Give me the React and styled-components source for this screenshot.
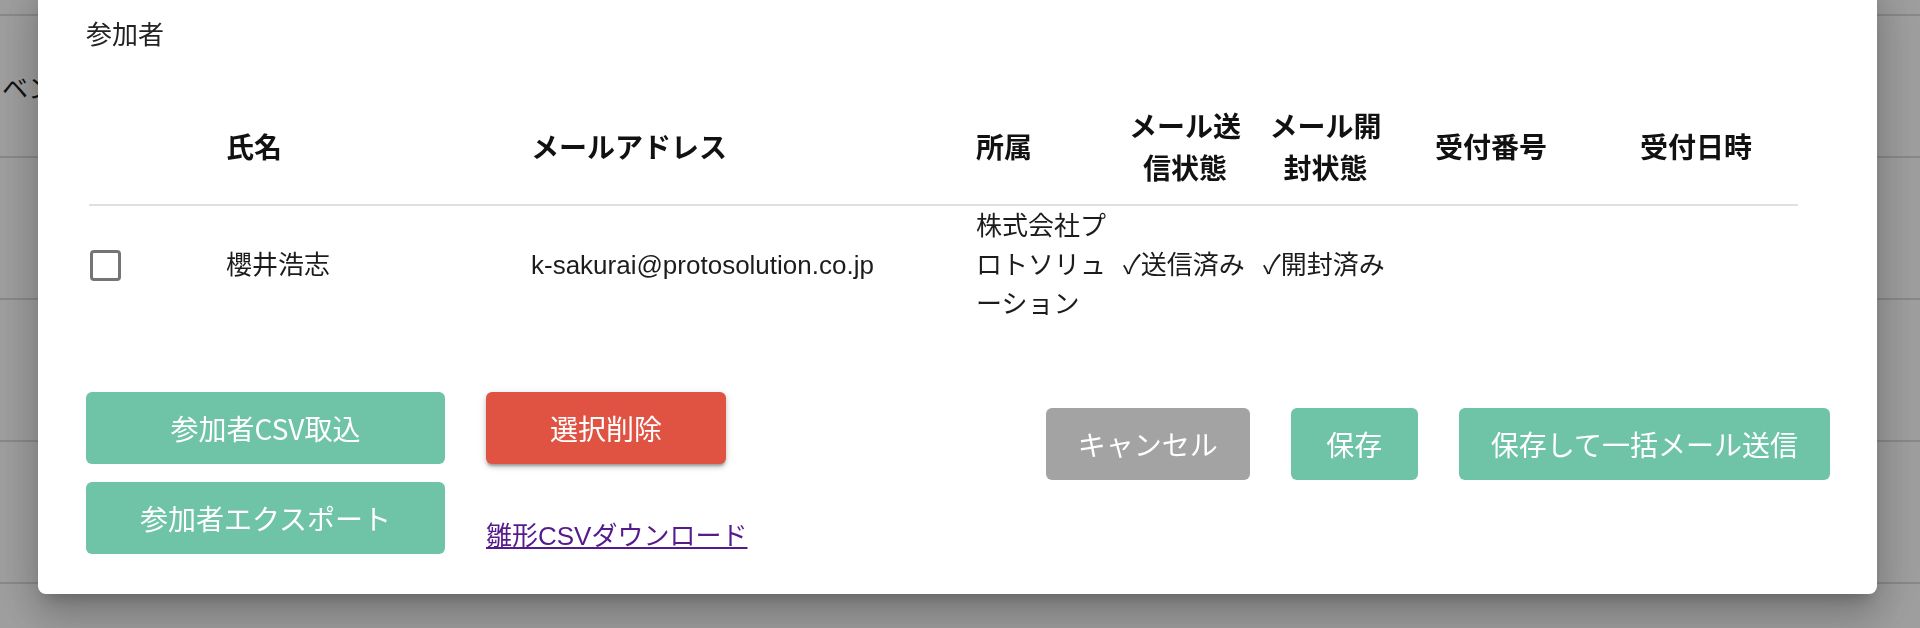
import React from "react";
import styled, { createGlobalStyle } from "styled-components";

const GlobalStyle = createGlobalStyle`
  html, body {
    margin: 0;
    padding: 0;
    overflow: hidden;
    background: #fff;
  }
  body {
    font-family: "Liberation Sans", "Noto Sans CJK JP", "DejaVu Sans", sans-serif;
    color: #1c1c1c;
  }
`;

const Page = styled.div`
  height: 628px;
  background: #fff;
`;

const BgRow = styled.div`
  height: ${({ $h }) => $h}px;
  border-bottom: 2px solid #dcdcdc;
  display: flex;
  align-items: center;
  padding-left: 2px;
  font-size: 26px;
  white-space: nowrap;
`;

const Backdrop = styled.div`
  position: fixed;
  inset: 0;
  background: rgba(0, 0, 0, 0.38);
`;

const Dialog = styled.div`
  position: fixed;
  left: 38px;
  top: -20px;
  width: 1839px;
  box-sizing: border-box;
  padding: 36px 47px 40px 48px;
  background: #fff;
  border-radius: 8px;
  box-shadow: 0 11px 15px -7px rgba(0, 0, 0, 0.2),
    0 24px 38px 3px rgba(0, 0, 0, 0.14), 0 9px 46px 8px rgba(0, 0, 0, 0.12);
`;

const Title = styled.div`
  font-size: 26px;
  line-height: 39px;
  color: #222;
`;

const Table = styled.div`
  margin: 33px 0 0 3px;
  width: 1709px;
`;

const Row = styled.div`
  display: grid;
  grid-template-columns: 121px 289px 429px 131px 124px 125px 174px 204px;
  column-gap: 16px;
  align-items: center;
`;

const HeadRow = styled(Row)`
  padding: 16px 0;
  border-bottom: 2px solid #e0e0e0;
`;

const BodyRow = styled(Row)`
  height: 118px;
`;

const HeadCell = styled.div`
  font-family: "Noto Sans CJK JP", sans-serif;
  font-size: 28px;
  line-height: 42px;
  font-weight: 700;
  color: #111;
  text-align: ${({ $center }) => ($center ? "center" : "left")};
`;

const Cell = styled.div`
  font-size: 26px;
  line-height: 39px;
  color: #1c1c1c;
  white-space: nowrap;
`;

const Check = styled.span`
  display: block;
  width: 31px;
  height: 31px;
  margin-left: 1px;
  box-sizing: border-box;
  border: 3.5px solid #757575;
  border-radius: 4px;
`;

const Actions = styled.div`
  display: flex;
  align-items: flex-start;
  margin-top: 68px;
`;

const Stack = styled.div`
  display: flex;
  flex-direction: column;
  align-items: flex-start;
  gap: 18px;
  margin-left: ${({ $ml }) => $ml || 0}px;
`;

const RightGroup = styled.div`
  display: flex;
  gap: 41px;
  margin-left: auto;
  margin-top: 16px;
`;

const colors = {
  mint: "#6fc4a8",
  red: "#e05343",
  gray: "#a3a3a3",
};

const Button = styled.button`
  height: 72px;
  min-width: ${({ $w }) => ($w ? `${$w}px` : "127px")};
  padding: 0 32px;
  border: none;
  border-radius: 6px;
  background: ${({ $tone }) => colors[$tone || "mint"]};
  color: #fff;
  font-family: "Noto Sans CJK JP", sans-serif;
  font-size: 28px;
  white-space: nowrap;
  cursor: pointer;
  box-shadow: ${({ $raised }) =>
    $raised
      ? "0 3px 2px -1px rgba(0,0,0,.2), 0 3px 4px 0 rgba(0,0,0,.16), 0 2px 8px 0 rgba(0,0,0,.12)"
      : "none"};
`;

const TemplateLink = styled.a`
  display: block;
  margin-top: 38px;
  font-size: 26px;
  line-height: 32px;
  color: #551a8b;
  text-decoration: underline;
  cursor: pointer;
`;

const participants = [
  {
    name: "櫻井浩志",
    email: "k-sakurai@protosolution.co.jp",
    org: ["株式会社プ", "ロトソリュ", "ーション"],
    sent: "✓送信済み",
    opened: "✓開封済み",
  },
];

export default function App() {
  return (
    <>
      <GlobalStyle />
      <Page>
        <BgRow $h={14} />
        <BgRow $h={140}>ベント</BgRow>
        <BgRow $h={140} />
        <BgRow $h={140} />
        <BgRow $h={140} />
      </Page>
      <Backdrop />
      <Dialog>
        <Title>参加者</Title>
        <Table>
          <HeadRow>
            <HeadCell />
            <HeadCell>氏名</HeadCell>
            <HeadCell>メールアドレス</HeadCell>
            <HeadCell>所属</HeadCell>
            <HeadCell $center>メール送信状態</HeadCell>
            <HeadCell $center>メール開封状態</HeadCell>
            <HeadCell $center>受付番号</HeadCell>
            <HeadCell $center>受付日時</HeadCell>
          </HeadRow>
          {participants.map((p) => (
            <BodyRow key={p.email}>
              <Cell>
                <Check />
              </Cell>
              <Cell>{p.name}</Cell>
              <Cell>{p.email}</Cell>
              <Cell>
                {p.org.map((line, i) => (
                  <div key={i}>{line}</div>
                ))}
              </Cell>
              <Cell>{p.sent}</Cell>
              <Cell>{p.opened}</Cell>
              <Cell />
              <Cell />
            </BodyRow>
          ))}
        </Table>
        <Actions>
          <Stack>
            <Button $w={359}>参加者CSV取込</Button>
            <Button $w={359}>参加者エクスポート</Button>
          </Stack>
          <Stack $ml={41}>
            <Button $w={240} $tone="red" $raised>
              選択削除
            </Button>
            <TemplateLink>雛形CSVダウンロード</TemplateLink>
          </Stack>
          <RightGroup>
            <Button $tone="gray">キャンセル</Button>
            <Button>保存</Button>
            <Button>保存して一括メール送信</Button>
          </RightGroup>
        </Actions>
      </Dialog>
    </>
  );
}
